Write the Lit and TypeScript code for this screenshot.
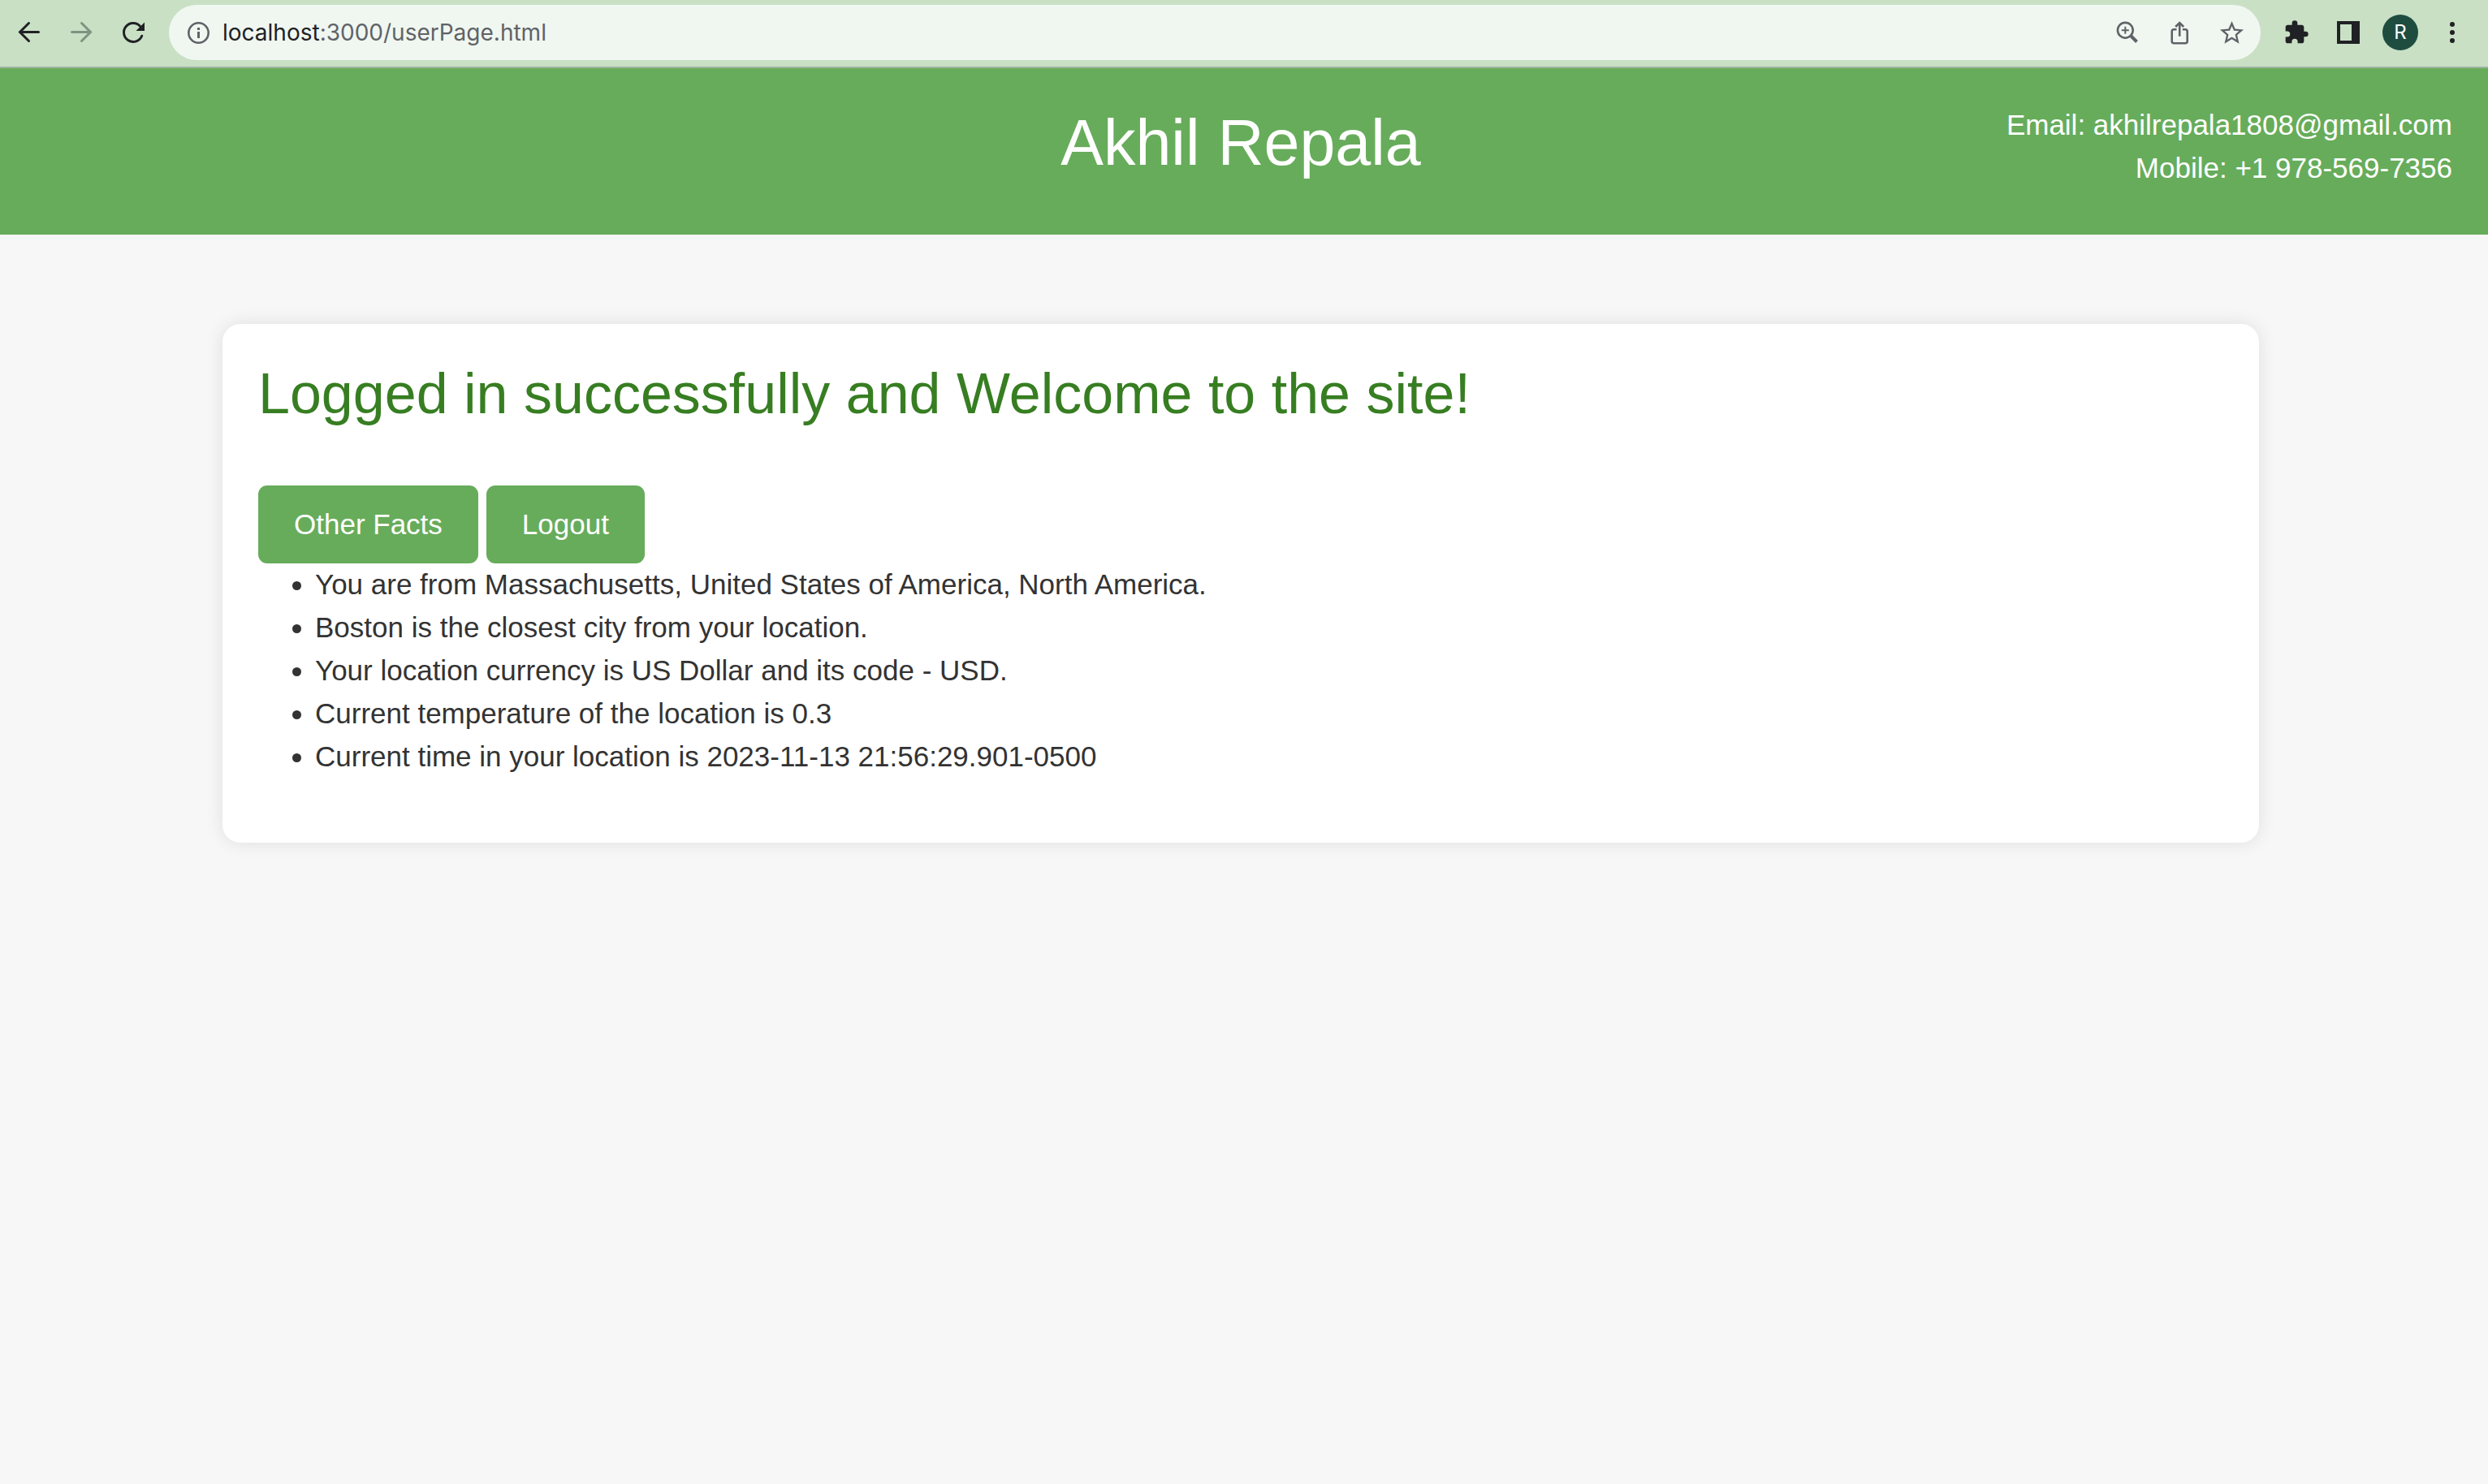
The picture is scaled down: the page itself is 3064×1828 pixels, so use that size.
import { LitElement, html, css } from "lit";
import { customElement, property } from "lit/decorators.js";

@customElement("browser-bar")
export class BrowserBar extends LitElement {
  @property() host = "localhost";
  @property() path = ":3000/userPage.html";

  static styles = css`
    :host {
      display: block;
      font-family: Inter, Roboto, "Liberation Sans", sans-serif;
    }
    .bar {
      display: flex;
      align-items: center;
      padding: 6px 24px 8px 16px;
      background: #c9e0c5;
      border-bottom: 2px solid #9fb4a0;
      color: #202124;
    }
    button {
      display: flex;
      align-items: center;
      justify-content: center;
      flex: none;
      width: 40px;
      height: 40px;
      margin: 0;
      padding: 0;
      border: 0;
      background: none;
      color: inherit;
      font: inherit;
    }
    svg {
      display: block;
      flex: none;
      fill: currentColor;
    }
    .nav {
      display: flex;
      gap: 24px;
      flex: none;
    }
    .nav button:disabled {
      color: #819280;
    }
    .address {
      display: flex;
      align-items: center;
      flex: 1;
      height: 68px;
      margin: 0 24px;
      padding: 0 16px;
      border-radius: 34px;
      box-sizing: border-box;
      background: #f0f7f0;
      color: #5f6368;
    }
    .url {
      flex: 1;
      margin-left: 10px;
      font-size: 28px;
      line-height: 34px;
    }
    .host {
      color: #202124;
    }
    .page-actions {
      display: flex;
      gap: 24px;
    }
    .tools {
      display: flex;
      align-items: center;
      gap: 24px;
    }
    .tools .avatar {
      width: 44px;
      height: 44px;
      margin: 0 -2px;
      border-radius: 50%;
      background: #1e4d40;
      color: #ffffff;
      font-size: 24px;
    }
  `;

  render() {
    return html`
      <div class="bar">
        <nav class="nav" aria-label="History">
          <button aria-label="Back">
            <svg width="40" height="40" viewBox="0 0 40 40">
              <path d="M31.5 19.500H9M19.500 8.500L8.500 19.500L19.500 30.500" fill="none" stroke="currentColor" stroke-width="3" stroke-linecap="round" />
            </svg>
          </button>
          <button aria-label="Forward" disabled>
            <svg width="40" height="40" viewBox="0 0 40 40">
              <path d="M8.500 19.500H31M20.500 8.500L31.500 19.500L20.500 30.500" fill="none" stroke="currentColor" stroke-width="3" stroke-linecap="round" />
            </svg>
          </button>
          <button aria-label="Reload">
            <svg width="40" height="40" viewBox="0 0 40 40">
              <path d="M30.700 24.200A11.500 11.500 0 1 1 28.500 12.200" fill="none" stroke="currentColor" stroke-width="3" stroke-linecap="round" />
              <path d="M34 7.500V18H23.500Z" />
            </svg>
          </button>
        </nav>
        <div class="address">
          <button aria-label="Site information">
            <svg width="40" height="40" viewBox="0 0 40 40">
              <circle cx="20.500" cy="20.500" r="12.200" fill="none" stroke="currentColor" stroke-width="2.600" />
              <path d="M19 14h3v3h-3zM19 19h3v8h-3z" />
            </svg>
          </button>
          <div class="url"><span class="host">${this.host}</span>${this.path}</div>
          <div class="page-actions">
            <button aria-label="Zoom">
              <svg width="40" height="40" viewBox="0 0 40 40">
                <path d="M17.300 12.800v9M12.800 17.300h9" fill="none" stroke="currentColor" stroke-width="2" />
                <circle cx="17.300" cy="17.300" r="9.400" fill="none" stroke="currentColor" stroke-width="2.600" />
                <path d="M24 24L31.500 31.500" fill="none" stroke="currentColor" stroke-width="4" />
              </svg>
            </button>
            <button aria-label="Share">
              <svg width="40" height="40" viewBox="0 0 40 40">
                <path d="M16.500 16.300H13.200a2.500 2.500 0 0 0-2.500 2.500v12a2.500 2.500 0 0 0 2.500 2.500h14a2.500 2.500 0 0 0 2.500-2.500v-12a2.500 2.500 0 0 0-2.500-2.500h-3.300M20.200 24.700V8M15.200 13L20.200 8L25.200 13" fill="none" stroke="currentColor" stroke-width="2.600" />
              </svg>
            </button>
            <button aria-label="Bookmark this page">
              <svg width="35" height="35" viewBox="0 0 24 24">
                <path d="M22 9.240l-7.190-.620L12 2 9.190 8.630 2 9.240l5.460 4.730L5.820 21 12 17.270 18.180 21l-1.630-7.030L22 9.240zM12 15.400l-3.760 2.270 1-4.280-3.320-2.880 4.380-.380L12 6.100l1.710 4.040 4.380.380-3.320 2.880 1 4.280L12 15.400z" />
              </svg>
            </button>
          </div>
        </div>
        <div class="tools">
          <button aria-label="Extensions">
            <svg width="32" height="32" viewBox="0 0 24 24">
              <path d="M20.500 11H19V7c0-1.100-.9-2-2-2h-4V3.500a2.500 2.500 0 0 0-5 0V5H4c-1.100 0-2 .9-2 2v3.800h1.500a2.700 2.700 0 0 1 0 5.400H2V20c0 1.100.9 2 2 2h3.800v-1.500a2.700 2.700 0 0 1 5.400 0V22H17c1.100 0 2-.9 2-2v-4h1.500a2.500 2.500 0 0 0 0-5z" />
            </svg>
          </button>
          <button aria-label="Side panel">
            <svg width="40" height="40" viewBox="0 0 40 40">
              <path d="M6 6H34V34H6ZM10 10V30H24V10Z" fill-rule="evenodd" />
            </svg>
          </button>
          <button class="avatar" aria-label="Profile">R</button>
          <button aria-label="Menu">
            <svg width="40" height="40" viewBox="0 0 40 40">
              <circle cx="20" cy="10" r="3" />
              <circle cx="20" cy="20" r="3" />
              <circle cx="20" cy="30" r="3" />
            </svg>
          </button>
        </div>
      </div>
    `;
  }
}

@customElement("app-root")
export class AppRoot extends LitElement {
  private facts = [
    "You are from Massachusetts, United States of America, North America.",
    "Boston is the closest city from your location.",
    "Your location currency is US Dollar and its code - USD.",
    "Current temperature of the location is 0.3",
    "Current time in your location is 2023-11-13 21:56:29.901-0500",
  ];

  static styles = css`
    :host {
      display: block;
      min-height: 100vh;
      background: #f7f7f7;
      color: #333333;
      font-family: "Liberation Sans", Arial, sans-serif;
      font-size: 35px;
      line-height: 52px;
    }
    .header {
      display: grid;
      grid-template-columns: 1fr auto 1fr;
      padding: 44px 44px 44px 36px;
      background: #67ac5b;
      color: #ffffff;
    }
    .name {
      grid-column: 2;
      margin: 0 0 22px;
      font-size: 79px;
      font-weight: 400;
      line-height: 95px;
    }
    .contact {
      display: flex;
      flex-direction: column;
      align-items: flex-end;
      gap: 1px;
    }
    .content {
      padding: 110px 8px 110px 0;
    }
    .card {
      max-width: 2508px;
      margin: 0 auto;
      padding: 44px;
      box-sizing: border-box;
      border-radius: 22px;
      background: #ffffff;
      box-shadow: 0 0 22px rgba(0, 0, 0, 0.1);
    }
    .welcome {
      margin: 0 0 70px;
      color: #377e22;
      font-size: 70px;
      font-weight: 400;
      line-height: 85px;
    }
    .actions {
      display: flex;
      gap: 10px;
    }
    .action {
      margin: 0;
      padding: 22px 44px;
      border: 0;
      border-radius: 11px;
      background: #67ac5b;
      color: #ffffff;
      font: inherit;
    }
    .facts {
      display: grid;
      gap: 1px;
      margin: 0 0 36px;
      padding: 0 0 0 70px;
    }
  `;

  render() {
    return html`
      <browser-bar></browser-bar>
      <header class="header">
        <h1 class="name">Akhil Repala</h1>
        <div class="contact">
          <span>Email: akhilrepala1808@gmail.com</span>
          <span>Mobile: +1 978-569-7356</span>
        </div>
      </header>
      <main class="content">
        <section class="card">
          <h2 class="welcome">Logged in successfully and Welcome to the site!</h2>
          <div class="actions">
            <button class="action">Other Facts</button>
            <button class="action">Logout</button>
          </div>
          <ul class="facts">
            ${this.facts.map((fact) => html`<li>${fact}</li>`)}
          </ul>
        </section>
      </main>
    `;
  }
}
